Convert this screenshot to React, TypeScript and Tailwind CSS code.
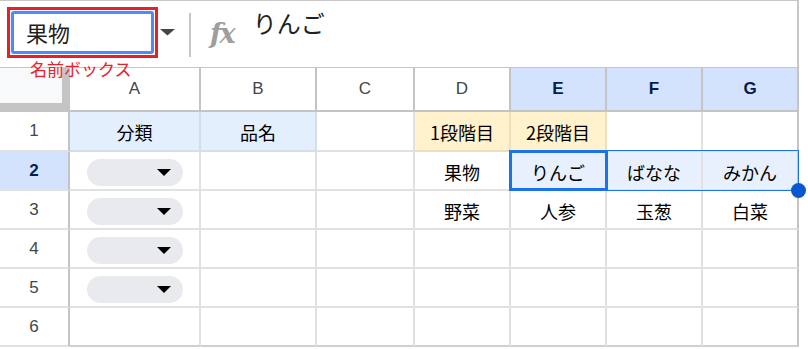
type CellDef = { text?: string; tone?: string; chip?: boolean };

const cjk = "font-['Noto_Sans_CJK_JP','Noto_Sans_CJK_SC',sans-serif]";

const blue = 'bg-[#e3effd] border-r-[#d3dfeb] border-b-[#d3dfeb]';
const yellow = 'bg-[#fff2cc] border-r-[#ece0bd] border-b-[#ece0bd]';
const range = 'bg-[#e8f0fe]';

const rows: CellDef[][] = [
  [{ text: '分類', tone: blue }, { text: '品名', tone: blue }, {}, { text: '1段階目', tone: yellow }, { text: '2段階目', tone: yellow }, {}, {}],
  [{ chip: true }, {}, {}, { text: '果物' }, { text: 'りんご', tone: range }, { text: 'ばなな', tone: range }, { text: 'みかん', tone: range }],
  [{ chip: true }, {}, {}, { text: '野菜' }, { text: '人参' }, { text: '玉葱' }, { text: '白菜' }],
  [{ chip: true }, {}, {}, {}, {}, {}, {}],
  [{ chip: true }, {}, {}, {}, {}, {}, {}],
  [{}, {}, {}, {}, {}, {}, {}],
];

const columns = ['A', 'B', 'C', 'D', 'E', 'F', 'G'];

function Chip() {
  return (
    <div className="flex h-[27px] w-[96px] items-center justify-end rounded-full bg-[#e8eaed] pr-[12px]">
      <svg width="14" height="7" viewBox="0 0 14 7">
        <path d="M0 0h14L7 7z" fill="#000" />
      </svg>
    </div>
  );
}

export default function App() {
  return (
    <div className="relative h-[349px] w-[808px] overflow-hidden bg-white font-['Liberation_Sans',Arial,sans-serif]">
      <div className="w-[799px]">
        {/* Toolbar */}
        <div className="flex h-[67px] items-start border-t border-r-2 border-[#c7c7c7]">
          <div className="ml-[7px] mt-[6px] h-[51px] w-[151px] border-[3px] border-[#e3202b] p-px">
            <div className={`flex h-full items-center rounded-[3px] border-[3px] border-[#4d8cf5] pl-[12px] text-[22px] text-[#1f1f1f] ${cjk}`}>
              果物
            </div>
          </div>
          <svg className="ml-[2px] mt-[28px]" width="15" height="7" viewBox="0 0 15 7">
            <path d="M0 0h15L7.5 6.5z" fill="#444746" />
          </svg>
          <div className="ml-[14px] mt-[12px] h-[44px] w-[2px] bg-[#c7c7c7]" />
          <span className="ml-[19px] mt-[19px] font-['DejaVu_Serif',serif] text-[27px] font-bold italic leading-none tracking-[-2px] text-[#9e9e9e]">
            fx
          </span>
          <span className={`ml-[19px] mt-[4px] text-[24px] text-[#1f1f1f] ${cjk}`}>りんご</span>
        </div>

        {/* Grid */}
        <div className="grid grid-cols-[70px_131px_116px_98px_96px_96px_96px_96px] grid-rows-[44px_40px_repeat(5,39px)] border-t border-[#c7c7c7]">
          <div className="border-r-[8px] border-b-[9px] border-[#c4c4c4] bg-[#f8f9fa]" />
          {columns.map((c, i) => (
            <div
              key={c}
              className={`flex items-center justify-center border-r-2 border-b-2 border-[#c4c4c4] text-[17px] ${
                i >= 4 ? 'bg-[#d3e3fd] font-bold text-[#041e49]' : 'text-[#444746]'
              }`}
            >
              {c}
            </div>
          ))}

          {rows.map((row, r) => (
            <>
              <div
                key={`h${r}`}
                className={`flex items-center justify-center border-r-2 border-b-2 border-[#e1e1e1] border-r-[#c4c4c4] text-[17px] ${
                  r === 1 ? 'bg-[#d3e3fd] font-bold text-[#041e49]' : 'text-[#444746]'
                }`}
              >
                {r + 1}
              </div>
              {row.map((cell, c) => (
                <div
                  key={`${r}-${c}`}
                  className={`flex justify-center border-r-2 border-b-2 border-[#e1e1e1] ${cell.tone ?? ''} ${
                    c === 6 ? 'border-r-[#c4c4c4]' : ''
                  } ${r === 5 ? 'border-b-[#d0d0d0]' : ''} ${
                    cell.chip ? 'items-start pt-[7px]' : 'items-center pt-[3px]'
                  } text-[18px] text-black ${cjk}`}
                >
                  {cell.chip ? <Chip /> : cell.text}
                </div>
              ))}
            </>
          ))}
        </div>
      </div>

      {/* Annotation */}
      <span className={`absolute left-[30px] top-[57px] text-[17px] leading-[24px] text-[#e8212b] ${cjk}`}>
        名前ボックス
      </span>

      {/* Selection */}
      <div className="absolute left-[509px] top-[150px] h-[41px] w-[290px] border border-[#1a73e8]" />
      <div className="absolute left-[509px] top-[150px] h-[41px] w-[99px] border-[3px] border-[#1a73e8]" />
      <div className="absolute left-[791px] top-[183px] h-[15px] w-[15px] rounded-full bg-[#0b57d0]" />
    </div>
  );
}
